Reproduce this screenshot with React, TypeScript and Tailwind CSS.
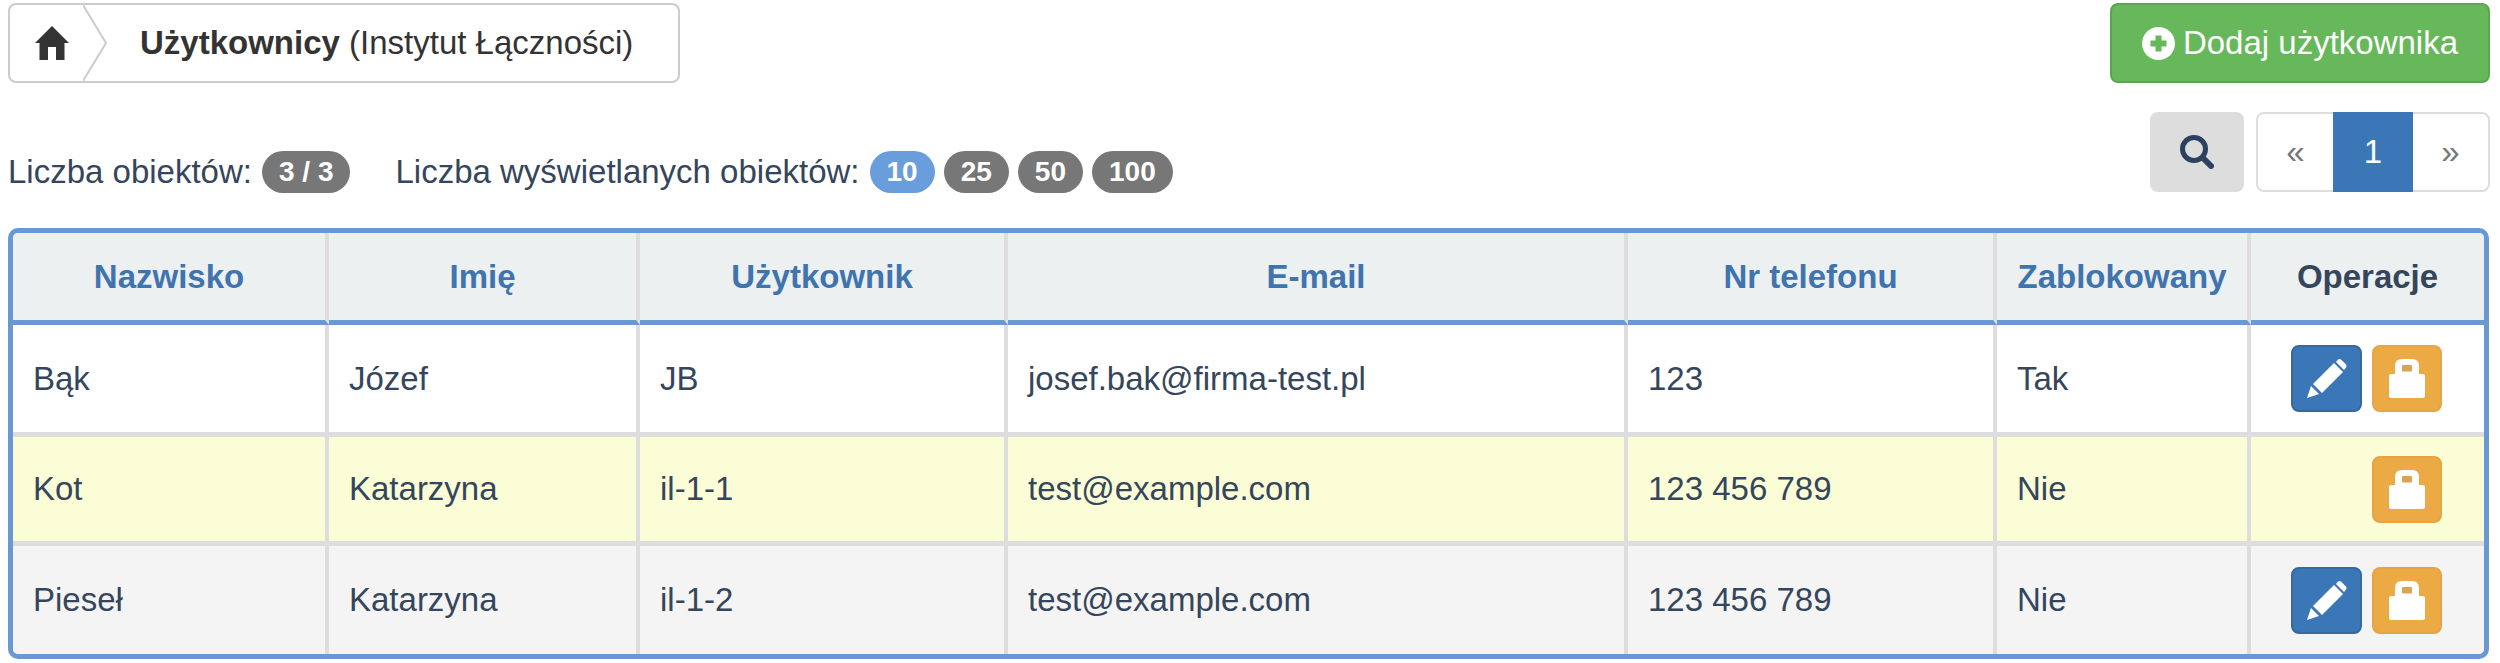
const font = "font-['Liberation_Sans',Arial,sans-serif]";

const HomeIcon = () => (
	<svg viewBox="0 0 34 34" className="h-[34px] w-[34px] fill-[#333333]">
		<path d="M17 0 34 17h-4.500v17H21V21h-8v13H4.500V17H0z" />
	</svg>
);

const PlusIcon = () => (
	<svg viewBox="0 0 33 33" className="h-[33px] w-[33px]">
		<circle cx="16.500" cy="16.500" r="16.500" fill="#ffffff" />
		<path d="M13.500 8.500h6v5h5v6h-5v5h-6v-5h-5v-6h5z" fill="#66b85a" />
	</svg>
);

const SearchIcon = () => (
	<svg viewBox="0 0 34 34" className="h-[34px] w-[34px]" fill="none">
		<circle cx="14" cy="14" r="11.500" stroke="#2c415f" strokeWidth="5" />
		<path d="m23 23 8 8" stroke="#2c415f" strokeWidth="6" strokeLinecap="round" />
	</svg>
);

const PencilIcon = () => (
	<svg viewBox="0 0 40 39" className="h-[39px] w-[40px] fill-white">
		<path d="M0 39 4 27l8 8z" />
		<path d="M6 25 27 4l9 9-21 21z" />
		<path d="M29 3l2-2.500q1.500-1 3 0l5 5q1 1.500 0 3L37 11z" />
	</svg>
);

const LockIcon = () => (
	<svg viewBox="0 0 36 39" className="h-[39px] w-[36px]">
		<path
			d="M6 15V7q0-7 7-7h10q7 0 7 7v8h4q2 0 2 2v20q0 2-2 2H2q-2 0-2-2V17q0-2 2-2z"
			fill="#ffffff"
		/>
		<rect x="13" y="6" width="10" height="6.500" rx="1" fill="#d9a552" />
	</svg>
);

const Badge = ({ children, active }: { children: string; active?: boolean }) => (
	<span
		className={
			active
				? "block h-[42px] rounded-[21px] bg-[#6a9ddc] px-[17px] text-[28px] leading-[42px] font-bold text-white"
				: "block h-[42px] rounded-[21px] bg-[#777777] px-[17px] text-[28px] leading-[42px] font-bold text-white"
		}
	>
		{children}
	</span>
);

const columns = [
	{ label: "Nazwisko", width: "w-[316px]" },
	{ label: "Imię", width: "w-[311px]" },
	{ label: "Użytkownik", width: "w-[368px]" },
	{ label: "E-mail", width: "w-[620px]" },
	{ label: "Nr telefonu", width: "w-[369px]" },
	{ label: "Zablokowany", width: "w-[254px]" },
];

const rows = [
	{ cells: ["Bąk", "Józef", "JB", "josef.bak@firma-test.pl", "123", "Tak"], edit: true, bg: "bg-white", height: "h-[112px]" },
	{ cells: ["Kot", "Katarzyna", "il-1-1", "test@example.com", "123 456 789", "Nie"], edit: false, bg: "bg-[#fafdd5]", height: "h-[109px]" },
	{ cells: ["Pieseł", "Katarzyna", "il-1-2", "test@example.com", "123 456 789", "Nie"], edit: true, bg: "bg-[#f4f4f4]", height: "h-[108px]" },
];

export default function App() {
	return (
		<div className={`${font} h-[663px] w-[2500px] overflow-hidden bg-white pt-[3px] pr-[10px] pl-[8px] text-[33px] leading-[46px] text-[#35465c]`}>
			<div className="flex items-start justify-between">
				<div className="flex h-[80px] w-[672px] items-center rounded-[8px] border-2 border-[#cccccc] text-[#333333]">
					<div className="relative flex h-full w-[84px] shrink-0 items-center justify-center">
						<HomeIcon />
						<svg viewBox="0 0 25 76" className="absolute top-0 left-[73px] h-[76px] w-[25px]" fill="none">
							<path d="M0 0 23 38 0 76" stroke="#cccccc" strokeWidth="2" />
						</svg>
					</div>
					<div className="ml-[46px] whitespace-nowrap">
						<b>Użytkownicy</b> (Instytut Łączności)
					</div>
				</div>
				<button className="flex h-[80px] w-[380px] items-center justify-center gap-[8px] rounded-[8px] border-2 border-[#5aa651] bg-[#66b85a] text-white">
					<PlusIcon />
					Dodaj użytkownika
				</button>
			</div>

			<div className="mt-[29px] flex h-[80px] items-start justify-between">
				<div className="mt-[37px] flex items-center whitespace-nowrap">
					<span>Liczba obiektów:</span>
					<span className="ml-[10px]"><Badge>3 / 3</Badge></span>
					<span className="ml-[45px]">Liczba wyświetlanych obiektów:</span>
					<span className="ml-[10px] flex gap-[9px]">
						<Badge active>10</Badge>
						<Badge>25</Badge>
						<Badge>50</Badge>
						<Badge>100</Badge>
					</span>
				</div>
				<div className="flex gap-[12px]">
					<button className="flex h-[80px] w-[94px] items-center justify-center rounded-[8px] bg-[#dddddd]">
						<SearchIcon />
					</button>
					<div className="flex h-[80px] w-[234px] rounded-[8px] border-2 border-[#dddddd]">
						<span className="flex w-[75px] items-center justify-center text-[#777777]">«</span>
						<span className="-my-[2px] flex w-[80px] items-center justify-center bg-[#3b77b6] text-white">1</span>
						<span className="flex flex-1 items-center justify-center text-[#777777]">»</span>
					</div>
				</div>
			</div>

			<div className="mt-[36px] w-[2481px] overflow-hidden rounded-[10px] border-[5px] border-[#6a98d3]">
				<table className="w-full table-fixed border-separate border-spacing-0">
					<thead>
						<tr className="h-[92px] bg-[#ecf0f1]">
							{columns.map((c) => (
								<th key={c.label} className={`${c.width} border-r-[4px] border-b-[5px] border-r-[#dddddd] border-b-[#6a98d3] font-bold text-[#3f74ae]`}>
									{c.label}
								</th>
							))}
							<th className="border-b-[5px] border-b-[#6a98d3] font-bold text-[#35465c]">Operacje</th>
						</tr>
					</thead>
					<tbody>
						{rows.map((row, i) => (
							<tr key={i} className={`${row.bg} ${row.height}`}>
								{row.cells.map((cell, j) => (
									<td key={j} className={`border-r-[4px] border-r-[#dddddd] pl-[20px] ${i < 2 ? "border-b-[5px] border-b-[#dddddd]" : ""}`}>
										{cell}
									</td>
								))}
								<td className={i < 2 ? "border-b-[5px] border-b-[#dddddd]" : ""}>
									<div className="flex justify-end gap-[10px] pr-[42px]">
										{row.edit && (
											<button className="flex h-[67px] w-[71px] items-center justify-center rounded-[8px] border-2 border-[#35699f] bg-[#3b77b6]">
												<PencilIcon />
											</button>
										)}
										<button className="flex h-[67px] w-[70px] items-center justify-center rounded-[8px] border-2 border-[#e5a445] bg-[#ecaa45]">
											<LockIcon />
										</button>
									</div>
								</td>
							</tr>
						))}
					</tbody>
				</table>
			</div>
		</div>
	);
}
